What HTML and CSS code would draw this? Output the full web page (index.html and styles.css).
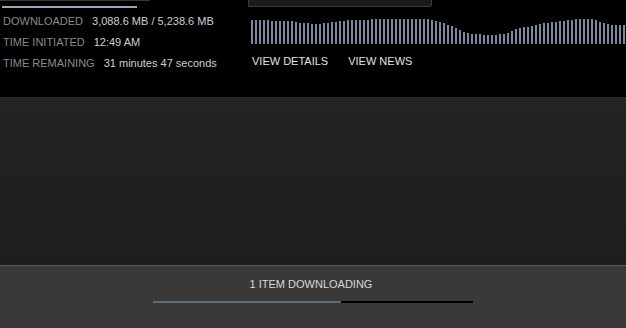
FILE: index.html
```html
<!DOCTYPE html>
<html lang="en">
<head>
    <meta charset="UTF-8">
    <title>Downloads</title>
    <link rel="stylesheet" href="styles.css">
</head>
<body>
    <div class="top">
        <!-- download stats -->
        <div class="stats">
            <div class="edge"></div>
            <div class="miniBar"></div>
            <div class="row"><span class="label">DOWNLOADED</span><span class="value">3,088.6 MB / 5,238.6 MB</span></div>
            <div class="row"><span class="label">TIME INITIATED</span><span class="value">12:49 AM</span></div>
            <div class="row"><span class="label">TIME REMAINING</span><span class="value">31 minutes 47 seconds</span></div>
        </div>

        <!-- graph + links -->
        <div class="graphCol">
            <div class="tab"></div>
            <div class="graph" id="graph"></div>
            <div class="links">
                <a href="#">VIEW DETAILS</a>
                <a href="#">VIEW NEWS</a>
            </div>
        </div>
    </div>

    <div class="middle"></div>

    <div class="footer">
        <p>1 ITEM DOWNLOADING</p>
        <div class="progress"><div class="fill" style="width: 188px"></div></div>
    </div>

    <script>
        // x position -> top of bar, bottom sits at 44
        const points = [[251,20],[290,21],[300,23],[315,24],[335,22],[350,20],[385,19],[428,19],[440,22],[450,26],[458,30],[470,34],[490,35],[505,34],[515,29],[530,26],[545,23],[560,21],[575,19],[590,19],[600,22],[610,25],[630,25]];

        function topAt(x) {
            for (let i = 1; i < points.length; i++) {
                const a = points[i - 1], b = points[i];
                if (x <= b[0]) {
                    return a[1] + (b[1] - a[1]) * (x - a[0]) / (b[0] - a[0]);
                }
            }
            return 25;
        }

        const graph = document.getElementById('graph');
        for (let x = 251; x < 626; x += 4) {
            const bar = document.createElement('div');
            bar.className = 'bar';
            bar.style.height = Math.round(44 - topAt(x)) + 'px';
            graph.appendChild(bar);
        }
    </script>
</body>
</html>
```

FILE: styles.css
```css
body {
    margin: 0;
    width: 626px;
    height: 328px;
    overflow: hidden;
    background-color: #1f1f1f;
    font-family: "Liberation Sans", Arial, sans-serif;
    font-size: 11px;
}

.top {
    display: flex;
    height: 97px;
    background-color: #000;
    border-bottom: 1px solid #2c2c2c;
}

/* 左侧统计 */
.stats {
    width: 251px;
}

.edge {
    width: 150px;
    height: 1px;
    background-color: #3a3834;
}

.miniBar {
    width: 135px;
    height: 2px;
    margin: 5px 0 0 2px;
    background-color: #9ea3b8;
}

.row {
    display: flex;
    gap: 9px;
    height: 21px;
    align-items: center;
    padding-left: 3px;
}

.row:nth-child(3) {
    margin-top: 2px;
}

.label {
    color: #8a8a8a;
}

.value {
    color: #cfcfcf;
}

/* 右侧图表 */
.graphCol {
    flex: 1;
}

.tab {
    width: 182px;
    height: 6px;
    margin-left: -3px;
    background-color: #1c1c1c;
    border: 1px solid #3a3a3a;
    border-top: none;
    border-radius: 0 0 3px 0;
}

.graph {
    display: flex;
    align-items: flex-end;
    gap: 2px;
    height: 25px;
    margin-top: 12px;
    overflow: hidden;
}

.bar {
    flex: none;
    width: 2px;
    background-color: #7a88a0;
}

.links {
    display: flex;
    gap: 20px;
    margin-top: 11px;
    padding-left: 1px;
}

.links a {
    color: #e2e2e2;
    text-decoration: none;
}

.middle {
    height: 167px;
    background: linear-gradient(#232323, #1e1e1e);
}

/* 底部下载栏 */
.footer {
    height: 62px;
    background-color: #3a3938;
    border-top: 1px solid #555;
    overflow: hidden;
}

.footer p {
    margin: 12px 0 0;
    padding-right: 4px;
    text-align: center;
    color: #d8d8d8;
}

.progress {
    width: 320px;
    height: 2px;
    margin: 11px 0 0 153px;
    background-color: #000;
}

.fill {
    height: 2px;
    background-color: #5e6c80;
}
```
